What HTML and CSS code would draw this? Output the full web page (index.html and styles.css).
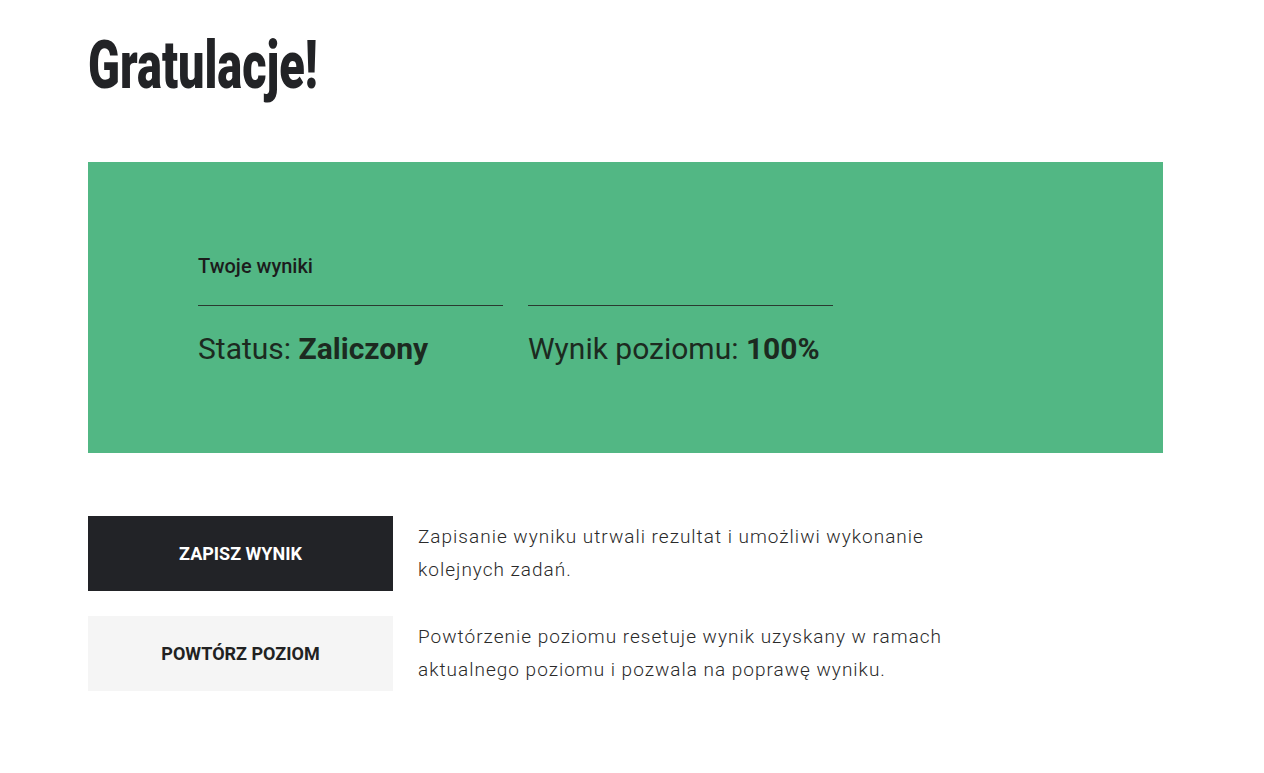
FILE: index.html
```
<!DOCTYPE html>
<html lang="pl">
<head>
  <meta charset="UTF-8" />
  <title>Gratulacje!</title>
  <link rel="stylesheet" href="styles.css">
</head>
<body>
  <div class="page">
    <h1><span>Gratulacje!</span></h1>

    <div class="results">
      <h3>Twoje wyniki</h3>
      <div class="results-row">
        <div class="result">Status: <strong>Zaliczony</strong></div>
        <div class="result">Wynik poziomu: <strong>100%</strong></div>
      </div>
    </div>

    <div class="actions">
      <div class="action">
        <button class="btn btn-dark">Zapisz wynik</button>
        <p>Zapisanie wyniku utrwali rezultat i umożliwi wykonanie kolejnych zadań.</p>
      </div>
      <div class="action">
        <button class="btn btn-light">Powtórz poziom</button>
        <p>Powtórzenie poziomu resetuje wynik uzyskany w ramach aktualnego poziomu i pozwala na poprawę wyniku.</p>
      </div>
    </div>
  </div>
</body>
</html>
```

FILE: styles.css
```
body {
  margin: 0;
  font-family: Roboto, "Liberation Sans", sans-serif;
  background: #fff;
  color: #222;
}
.page {
  padding: 30px 101px 40px 88px;
}
h1 {
  margin: 0;
  font-family: Roboto, "Liberation Sans", sans-serif;
  font-weight: 900;
  font-size: 66px;
  line-height: 72px;
  color: #222326;
}
/* no condensed face offline, so squeeze the heading */
h1 span {
  display: inline-block;
  transform: scaleX(0.71);
  transform-origin: left center;
}
.results {
  margin-top: 60px;
  background: #52b784;
  height: 291px;
  box-sizing: border-box;
  padding: 93px 110px 0;
}
.results h3 {
  margin: 0;
  font-size: 20px;
  font-weight: 500;
  line-height: 22px;
  color: #1c1c1c;
}
.results-row {
  display: flex;
  gap: 25px;
  margin-top: 28px;
}
.result {
  width: 305px;
  border-top: 1px solid #2a3a30;
  padding-top: 24px;
  font-size: 30px;
  line-height: 38px;
  color: #1c2a20;
}
.result strong {
  font-weight: 700;
}
.actions {
  margin-top: 63px;
  display: flex;
  flex-direction: column;
  gap: 25px;
}
.action {
  display: flex;
  align-items: flex-start;
  gap: 25px;
}
.btn {
  width: 305px;
  height: 75px;
  flex-shrink: 0;
  border: none;
  font-family: Roboto, "Liberation Sans", sans-serif;
  font-size: 18px;
  font-weight: 700;
  text-transform: uppercase;
  cursor: pointer;
}
.btn-dark {
  background: #222327;
  color: #fff;
}
.btn-light {
  background: #f5f5f5;
  color: #222;
}
.action p {
  margin: 4px 0 0;
  max-width: 560px;
  font-size: 19px;
  font-weight: 300;
  line-height: 33px;
  color: #2a2a2a;
  letter-spacing: 1px;
}
```
